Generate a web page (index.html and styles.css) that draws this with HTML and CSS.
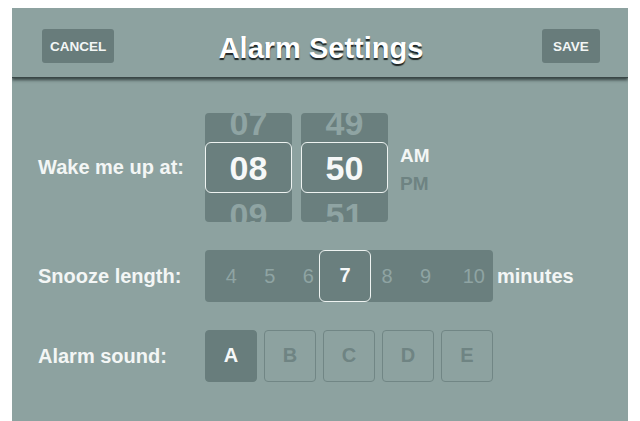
FILE: index.html
```html
<!DOCTYPE html>
<html lang="en">
<head>
    <meta charset="UTF-8">
    <meta name="viewport" content="width=device-width, initial-scale=1.0">
    <title>Alarm Settings</title>
    <link rel="stylesheet" href="styles.css">
</head>
<body>
    <div class="panel">
        <div class="top-bar">
            <button class="bar-button cancel-button">CANCEL</button>
            <h1 class="bar-title">Alarm Settings</h1>
            <button class="bar-button save-button">SAVE</button>
        </div>

        <div class="settings">
            <div class="setting-row">
                <div class="setting-label">Wake me up at:</div>
                <div class="time-picker">
                    <div class="wheel">
                        <div class="wheel-list">
                            <div class="wheel-item">07</div>
                            <div class="wheel-item selected">08</div>
                            <div class="wheel-item">09</div>
                        </div>
                    </div>
                    <div class="wheel">
                        <div class="wheel-list">
                            <div class="wheel-item">49</div>
                            <div class="wheel-item selected">50</div>
                            <div class="wheel-item">51</div>
                        </div>
                    </div>
                    <div class="ampm">
                        <div class="ampm-item active">AM</div>
                        <div class="ampm-item">PM</div>
                    </div>
                </div>
            </div>

            <div class="setting-row">
                <div class="setting-label">Snooze length:</div>
                <div class="snooze-strip">
                    <div class="snooze-item">4</div>
                    <div class="snooze-item">5</div>
                    <div class="snooze-item">6</div>
                    <div class="snooze-item selected">7</div>
                    <div class="snooze-item">8</div>
                    <div class="snooze-item">9</div>
                    <div class="snooze-item last">10</div>
                </div>
                <div class="unit-label">minutes</div>
            </div>

            <div class="setting-row">
                <div class="setting-label">Alarm sound:</div>
                <div class="sound-options">
                    <div class="sound-option active">A</div>
                    <div class="sound-option">B</div>
                    <div class="sound-option">C</div>
                    <div class="sound-option">D</div>
                    <div class="sound-option">E</div>
                </div>
            </div>
        </div>
    </div>
</body>
</html>
```
FILE: styles.css
```css
body {
    margin: 8px 12px 0;
    background-color: #ffffff;
    font-family: "Liberation Sans", Arial, Helvetica, sans-serif;
}
.panel {
    height: 413px;
    background-color: #8da2a0;
    color: #f3f6f5;
}
.top-bar {
    display: grid;
    grid-template-columns: 1fr auto 1fr;
    align-items: start;
    height: 70px;
    box-sizing: border-box;
    padding: 21px 28px 0 30px;
    border-bottom: 1px solid #3a4747;
    box-shadow: 0 2px 3px rgba(15, 25, 25, 0.7);
}
.bar-button {
    height: 34px;
    padding: 0 8px;
    border: none;
    border-radius: 3px;
    background-color: #687c7b;
    color: #f3f6f5;
    font-family: inherit;
    font-size: 13.5px;
    font-weight: bold;
}
.cancel-button {
    justify-self: start;
}
.save-button {
    justify-self: end;
    min-width: 58px;
}
.bar-title {
    margin: 0;
    font-size: 29px;
    line-height: 38px;
    font-weight: bold;
    color: #ffffff;
    text-shadow: 0 2px 1px rgba(10, 15, 15, 0.85);
}
.settings {
    display: flex;
    flex-direction: column;
    gap: 28px;
    padding: 35px 0 0 26px;
}
.setting-row {
    display: flex;
    align-items: center;
}
.setting-label {
    width: 167px;
    font-size: 20px;
    font-weight: bold;
}
.time-picker {
    display: flex;
    align-items: center;
    gap: 9px;
}
.wheel {
    width: 87px;
    height: 109px;
    border-radius: 4px;
    background-color: #6a7f7e;
    overflow: hidden;
}
.wheel-list {
    margin-top: -14.5px;
}
.wheel-item {
    height: 46px;
    line-height: 48px;
    text-align: center;
    font-size: 34px;
    font-weight: bold;
    color: #8fa4a3;
}
.wheel-item.selected {
    height: 51px;
    margin: -2.5px 0;
    box-sizing: border-box;
    line-height: 51px;
    border: 1.5px solid #eef3f1;
    border-radius: 6px;
    color: #f6f8f8;
}
.ampm {
    margin-left: 3px;
    padding-top: 5px;
    font-size: 19px;
    font-weight: bold;
}
.ampm-item {
    line-height: 28px;
    color: #6e8382;
}
.ampm-item.active {
    color: #f3f6f5;
}
.snooze-strip {
    display: flex;
    align-items: center;
    width: 288px;
    height: 52px;
    box-sizing: border-box;
    padding-left: 7px;
    border-radius: 4px;
    background-color: #6a7f7e;
}
.snooze-item {
    width: 38.5px;
    text-align: center;
    font-size: 20px;
    color: #8fa4a3;
}
.snooze-item.last {
    flex: 1;
    padding-right: 8px;
    text-align: right;
}
.snooze-item.selected {
    width: 52px;
    height: 52px;
    margin: 0 -3.25px 0 -8.5px;
    box-sizing: border-box;
    line-height: 49px;
    border: 1.5px solid #eef3f1;
    border-radius: 6px;
    font-weight: bold;
    color: #f6f8f8;
}
.unit-label {
    margin-left: 4px;
    font-size: 20px;
    font-weight: bold;
}
.sound-options {
    display: flex;
    gap: 7px;
}
.sound-option {
    width: 52px;
    height: 52px;
    box-sizing: border-box;
    border: 1.5px solid #718685;
    border-radius: 4px;
    line-height: 49px;
    text-align: center;
    font-size: 20px;
    font-weight: bold;
    color: #6f8483;
}
.sound-option.active {
    border-color: #687d7c;
    background-color: #687d7c;
    color: #f6f8f8;
}
```
